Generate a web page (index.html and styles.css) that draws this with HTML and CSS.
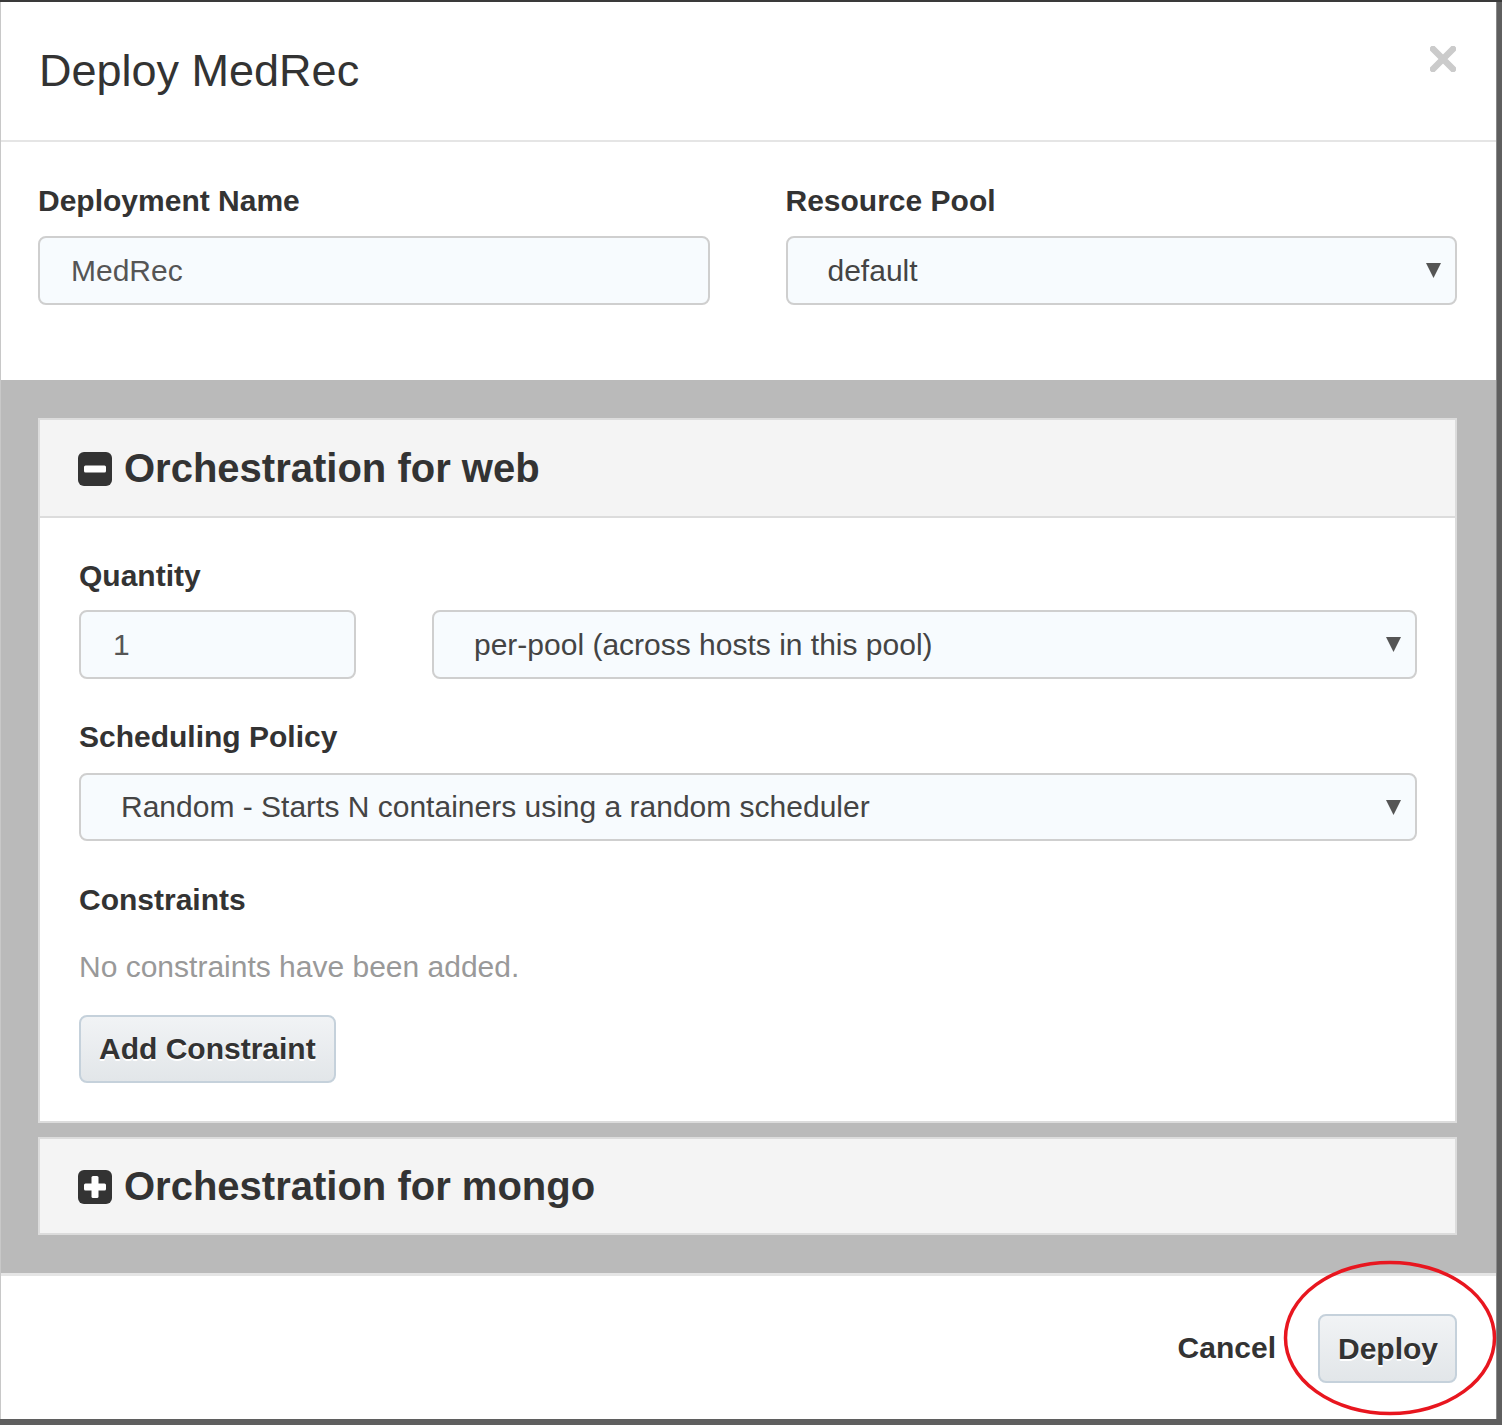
FILE: index.html
```html
<!DOCTYPE html>
<html>
<head>
<meta charset="utf-8">
<title>Deploy MedRec</title>
<link rel="stylesheet" href="styles.css">
</head>
<body>
<div class="screen">
  <div class="modal">
    <div class="modal-header">
      <h1 class="modal-title">Deploy MedRec</h1>
      <svg class="close" width="26" height="26" viewBox="0 0 26 26"><path d="M3 3 L23 23 M23 3 L3 23" stroke="#cbcbcb" stroke-width="6.5" stroke-linecap="square"/></svg>
    </div>
    <div class="modal-body">
      <div class="two-col">
        <div class="field">
          <div class="label">Deployment Name</div>
          <div class="input">MedRec</div>
        </div>
        <div class="field">
          <div class="label">Resource Pool</div>
          <div class="select pool"><span>default</span><svg class="caret" width="15" height="15" viewBox="0 0 15 15"><path d="M0 0 H15 L7.5 15 Z" fill="#555"/></svg></div>
        </div>
      </div>
    </div>
    <div class="orchestrations">
      <div class="panel">
        <div class="panel-heading">
          <svg class="sq-icon" width="34" height="34" viewBox="0 0 34 34"><rect x="0" y="0" width="34" height="34" rx="6" fill="#333"/><rect x="6" y="13.5" width="22" height="7" rx="1.5" fill="#fff"/></svg>
          <span class="panel-title">Orchestration for web</span>
        </div>
        <div class="panel-body">
          <div class="label">Quantity</div>
          <div class="qty-row">
            <div class="input qty">1</div>
            <div class="select"><span>per-pool (across hosts in this pool)</span><svg class="caret" width="15" height="15" viewBox="0 0 15 15"><path d="M0 0 H15 L7.5 15 Z" fill="#555"/></svg></div>
          </div>
          <div class="label spaced">Scheduling Policy</div>
          <div class="select policy"><span>Random - Starts N containers using a random scheduler</span><svg class="caret" width="15" height="15" viewBox="0 0 15 15"><path d="M0 0 H15 L7.5 15 Z" fill="#555"/></svg></div>
          <div class="label spaced2">Constraints</div>
          <div class="muted">No constraints have been added.</div>
          <button class="btn add">Add Constraint</button>
        </div>
      </div>
      <div class="panel collapsed">
        <div class="panel-heading">
          <svg class="sq-icon" width="34" height="34" viewBox="0 0 34 34"><rect x="0" y="0" width="34" height="34" rx="6" fill="#333"/><rect x="6" y="13.5" width="22" height="7" rx="1.5" fill="#fff"/><rect x="13.5" y="6" width="7" height="22" rx="1.5" fill="#fff"/></svg>
          <span class="panel-title">Orchestration for mongo</span>
        </div>
      </div>
    </div>
    <div class="modal-footer">
      <span class="cancel">Cancel</span>
      <button class="btn deploy">Deploy</button>
      <svg class="highlight" width="220" height="162" viewBox="0 0 220 162"><ellipse cx="110" cy="81" rx="104.5" ry="75.5" fill="none" stroke="#e8161f" stroke-width="3.5"/></svg>
    </div>
  </div>
</div>
</body>
</html>
```

FILE: styles.css
```css
* { box-sizing: border-box; }
html, body { margin: 0; padding: 0; }
body {
  width: 1502px;
  height: 1425px;
  background: #5f5f5f;
  font-family: "Liberation Sans", Arial, sans-serif;
  color: #333;
  overflow: hidden;
}
.screen {
  padding-top: 2px;
  height: 1425px;
  background: linear-gradient(#3a3a3a, #3a3a3a) top/100% 2px no-repeat, #5f5f5f;
}
.modal {
  width: 1497px;
  height: 1417px;
  background: #fff;
  border-left: 1px solid #c8c8c8;
  border-right: 1px solid #8a8a8a;
  display: flex;
  flex-direction: column;
  position: relative;
}
.modal-header {
  height: 140px;
  border-bottom: 2px solid #e5e5e5;
  display: flex;
  align-items: center;
  justify-content: space-between;
  padding: 0 40px 0 38px;
  flex: none;
}
.modal-title {
  margin: 0;
  font-size: 45px;
  font-weight: 400;
  line-height: 52px;
  color: #333;
}
.close { margin-top: -24px; }
.modal-body {
  height: 238px;
  padding: 41px 39px 0 37px;
  flex: none;
}
.two-col {
  display: grid;
  grid-template-columns: 1fr 1fr;
  column-gap: 76px;
}
.label {
  font-size: 30px;
  font-weight: 700;
  line-height: 36px;
  color: #333;
  margin-bottom: 17px;
}
.input, .select {
  height: 69px;
  border: 2px solid #cfcfcf;
  border-radius: 8px;
  background: #f7fbfe;
  font-size: 30px;
  color: #555;
  display: flex;
  align-items: center;
}
.input { padding-left: 31px; }
.select {
  padding-left: 40px;
  padding-right: 14px;
  justify-content: space-between;
  color: #444;
}
.caret { flex: none; }
.orchestrations {
  height: 893px;
  background: #bababa;
  padding: 38px 39px 38px 37px;
  flex: none;
}
.panel {
  border: 2px solid #dcdcdc;
  background: #fff;
}
.panel.collapsed { margin-top: 14px; }
.panel-heading {
  height: 96px;
  background: #f4f4f4;
  display: flex;
  align-items: center;
  padding-left: 38px;
  gap: 12px;
}
.panel-body {
  border-top: 2px solid #dcdcdc;
  padding: 40px 38px 38px 39px;
  height: 605px;
}
.panel.collapsed .panel-heading { height: 94px; }
.sq-icon { flex: none; margin-top: 1px; }
.panel-title {
  font-size: 40px;
  font-weight: 700;
  line-height: 46px;
  color: #333;
}
.panel-body .label { margin-bottom: 16px; }
.qty-row {
  display: grid;
  grid-template-columns: 277px 1fr;
  column-gap: 76px;
}
.input.qty { padding-left: 32px; }
.select.policy { height: 68px; }
.label.spaced { margin-top: 40px; margin-bottom: 18px; }
.label.spaced2 { margin-top: 41px; margin-bottom: 31px; }
.muted {
  font-size: 30px;
  line-height: 36px;
  color: #999;
}
.btn {
  font-family: "Liberation Sans", Arial, sans-serif;
  font-size: 30px;
  font-weight: 700;
  color: #333;
  text-shadow: 0 2px 0 #fff;
  background: linear-gradient(#f1f3f5, #e2e6e9);
  border: 2px solid #c5d1db;
  border-radius: 8px;
  height: 68px;
  padding: 0 18px;
  display: block;
  white-space: nowrap;
}
.btn.add { margin-top: 30px; }
.modal-footer {
  flex: 1;
  border-top: 3px solid #e5e5e5;
  display: flex;
  align-items: center;
  justify-content: flex-end;
  padding-right: 39px;
  gap: 42px;
  position: relative;
}
.cancel {
  font-size: 30px;
  font-weight: 700;
  color: #333;
}
.btn.deploy {
  width: 139px;
  height: 69px;
  margin-top: 2px;
  padding: 0 18px;
}
.highlight {
  position: absolute;
  right: -4px;
  top: -19px;
}
```
